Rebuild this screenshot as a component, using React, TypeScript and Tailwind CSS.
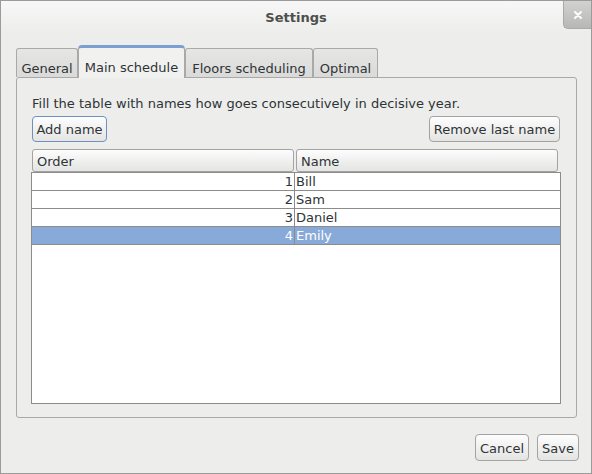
import React from "react";

const rows = [
  { n: 1, name: "Bill" },
  { n: 2, name: "Sam" },
  { n: 3, name: "Daniel" },
  { n: 4, name: "Emily", selected: true },
];

function Tab({ label, w, selected }: { label: string; w: string; selected?: boolean }) {
  if (selected) {
    return (
      <div
        className={`${w} h-[33px] -mb-px relative z-10 flex items-end justify-center pb-[3px] leading-[15px] bg-[#f1f1f0] border border-b-0 border-[#a9a9a9] border-t-[3px] border-t-[#7a9fd0] rounded-t-[4px] text-[#2e3436]`}
      >
        {label}
      </div>
    );
  }
  return (
    <div
      className={`${w} h-[29px] flex items-end justify-center pb-[1px] leading-[15px] bg-gradient-to-b from-[#e6e6e5] to-[#dadad9] border border-b-0 border-[#a9a9a9] rounded-t-[3px] text-[#2e3436]`}
    >
      {label}
    </div>
  );
}

function Btn({ children, w, focus }: { children: React.ReactNode; w: string; focus?: boolean }) {
  return (
    <div
      className={`${w} h-[26px] flex items-center justify-center leading-[15px] pt-px rounded-[4px] border ${
        focus ? "border-[#6f91c2]" : "border-[#a3a3a3]"
      } bg-gradient-to-b from-[#fdfdfd] to-[#e4e4e3] text-[#2e3436]`}
    >
      {children}
    </div>
  );
}

export default function App() {
  return (
    <div className="w-[592px] h-[474px] box-border border border-[#9b9b9b] bg-[#ededec] flex flex-col font-['DejaVu_Sans',sans-serif] text-[13px] text-[#2e3436] overflow-hidden">
      {/* Title bar */}
      <div className="h-[32px] relative flex items-center justify-center bg-gradient-to-b from-[#f7f7f7] to-[#ededec]">
        <span className="font-bold text-[#4d4f4b] leading-[15px]">Settings</span>
        <div className="absolute right-0 top-0 w-[28px] h-[28px] rounded-bl-[5px] bg-gradient-to-b from-[#d2d2d1] to-[#b7b7b6] border-l border-b border-[#a9a9a9] flex items-center justify-center">
          <svg width="10" height="10" viewBox="0 0 10 10">
            <path d="M2 2 L8 8 M8 2 L2 8" stroke="#ffffff" strokeWidth="2" strokeLinecap="round" />
          </svg>
        </div>
      </div>

      {/* Content */}
      <div className="flex-1 flex flex-col pl-[15px] pr-[14px] pt-[12px]">
        {/* Tabs */}
        <div className="h-[32px] flex items-end">
          <Tab label="General" w="w-[62px]" />
          <Tab label="Main schedule" w="w-[107px]" selected />
          <Tab label="Floors scheduling" w="w-[128px]" />
          <Tab label="Optimal" w="w-[65px]" />
        </div>

        {/* Pane */}
        <div className="h-[341px] border border-[#a9a9a9] rounded-[3px] bg-[#ededec] pl-[14px] pr-[15px] pt-[16px] flex flex-col">
          <div className="ml-px leading-[17px] pt-px h-[17px]">
            Fill the table with names how goes consecutively in decisive year.
          </div>
          <div className="mt-[5px] flex justify-between ml-px mr-px">
            <Btn w="w-[75px]" focus>
              Add name
            </Btn>
            <Btn w="w-[131px]">Remove last name</Btn>
          </div>

          {/* Header */}
          <div className="mt-[7px] h-[23px] flex gap-[2px] ml-px mr-[3px]">
            <div className="w-[262px] h-[23px] border border-[#a3a3a3] rounded-[3px] bg-gradient-to-b from-[#fdfdfd] to-[#e4e4e3] pl-[4px] pt-px flex items-center leading-[15px]">
              Order
            </div>
            <div className="flex-1 h-[23px] border border-[#a3a3a3] rounded-[3px] bg-gradient-to-b from-[#fdfdfd] to-[#e4e4e3] pl-[4px] pt-px flex items-center leading-[15px]">
              Name
            </div>
          </div>

          {/* Body */}
          <div className="h-[232px] border border-[#8c8c8c] bg-white flex flex-col">
            {rows.map((r) => (
              <div
                key={r.n}
                className={`h-[18px] flex border-b border-[#8c8c8c] leading-[16px] pt-px ${
                  r.selected ? "bg-[#87aad8] text-white" : "text-[#2e3436]"
                }`}
              >
                <div className="w-[263px] -mt-px border-r border-[#8c8c8c] text-right pr-[1px] pt-px">{r.n}</div>
                <div className="flex-1 pl-[1px]">{r.name}</div>
              </div>
            ))}
          </div>
        </div>

        {/* Bottom buttons */}
        <div className="mt-[16px] flex justify-end gap-[8px] -mr-[2px]">
          <div className="w-[54px] h-[27px] flex items-center justify-center leading-[15px] pt-px rounded-[4px] border border-[#a3a3a3] bg-gradient-to-b from-[#fdfdfd] to-[#e4e4e3]">
            Cancel
          </div>
          <div className="w-[42px] h-[27px] flex items-center justify-center leading-[15px] pt-px rounded-[4px] border border-[#a3a3a3] bg-gradient-to-b from-[#fdfdfd] to-[#e4e4e3]">
            Save
          </div>
        </div>
      </div>
    </div>
  );
}
